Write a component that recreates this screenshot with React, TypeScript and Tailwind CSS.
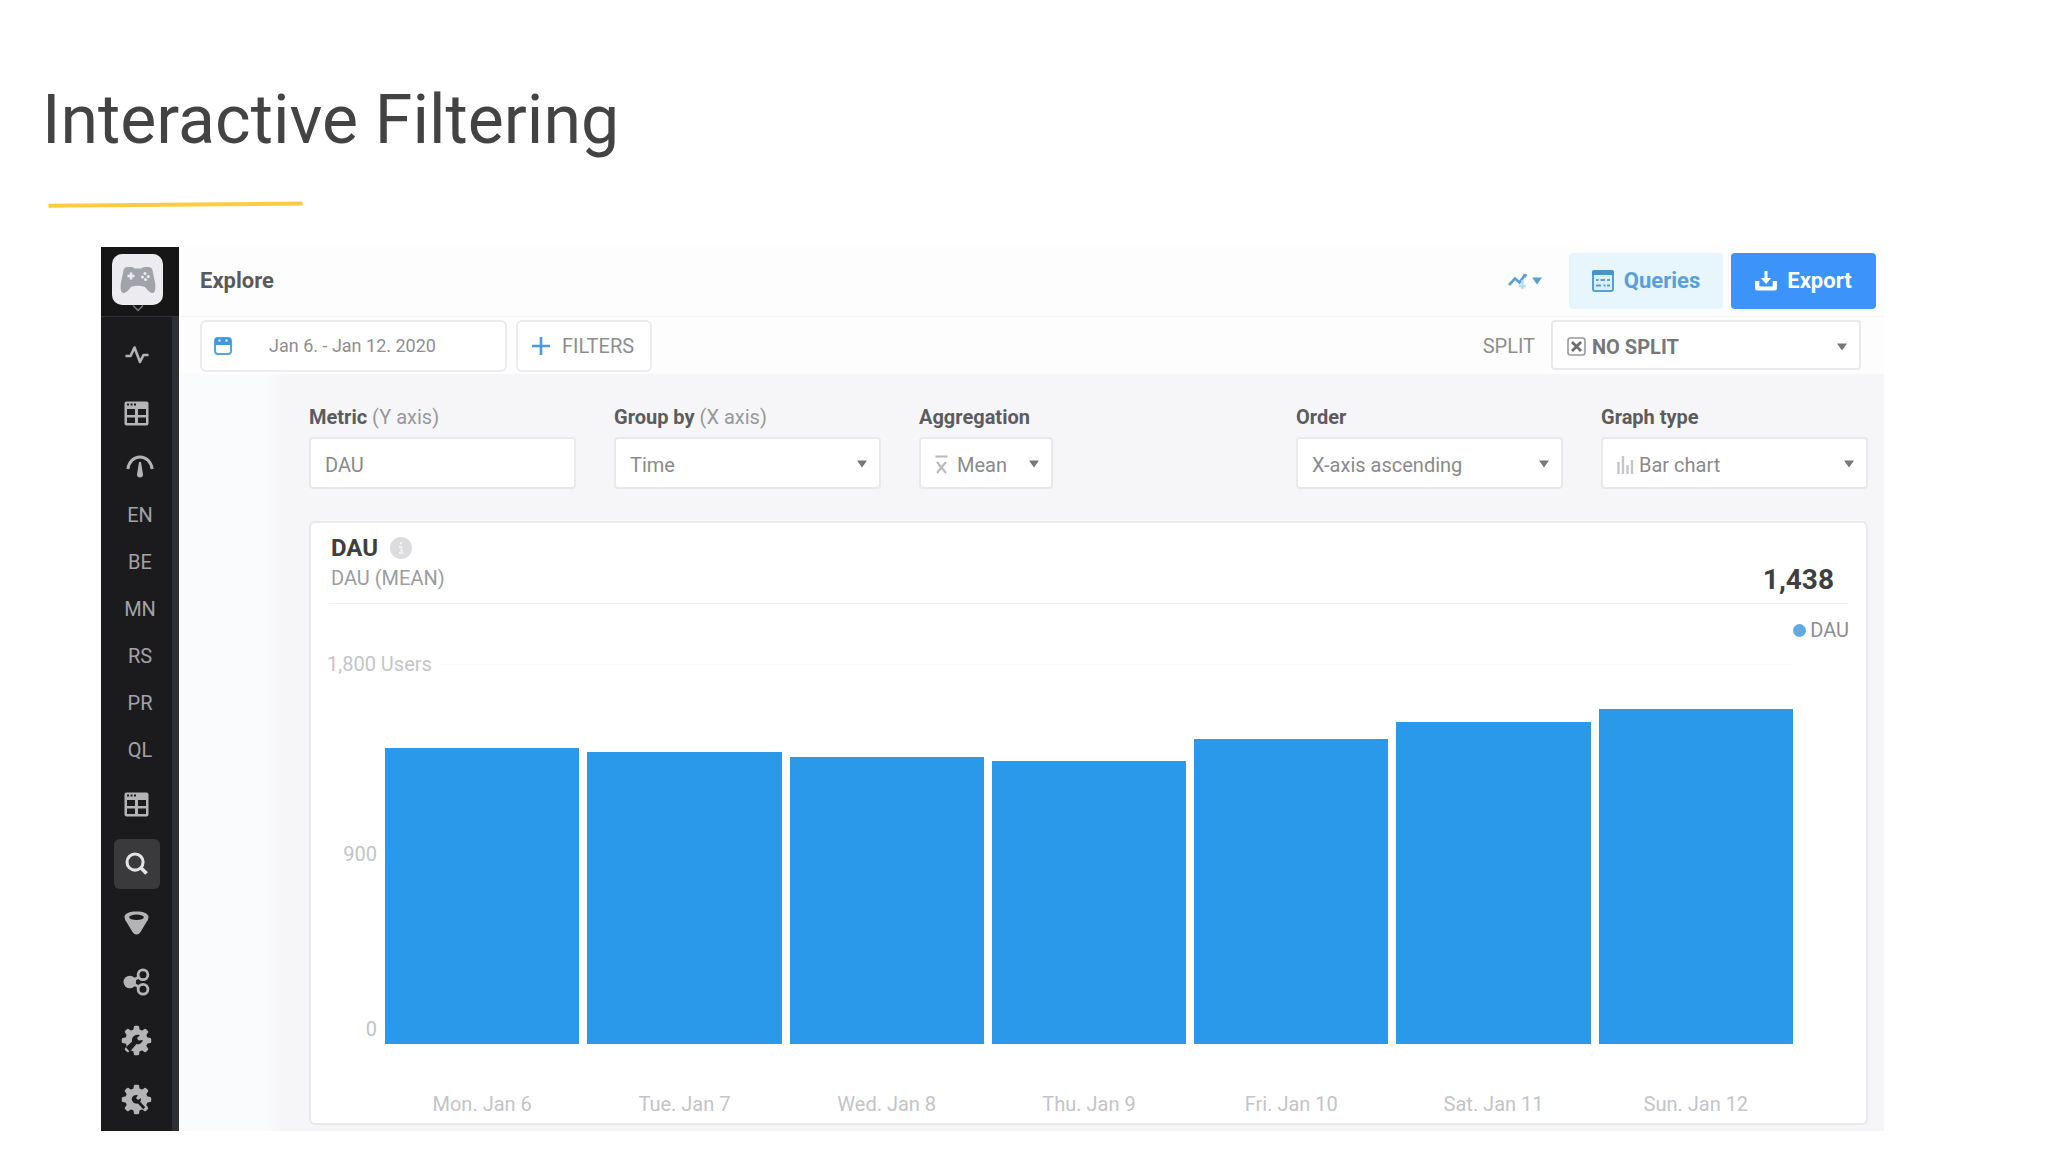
import type { ReactNode } from 'react'
import clsx from 'clsx'

const users = [
  { label: 'Mon. Jan 6', value: 1406 },
  { label: 'Tue. Jan 7', value: 1387 },
  { label: 'Wed. Jan 8', value: 1363 },
  { label: 'Thu. Jan 9', value: 1344 },
  { label: 'Fri. Jan 10', value: 1448 },
  { label: 'Sat. Jan 11', value: 1529 },
  { label: 'Sun. Jan 12', value: 1590 },
]

const maxUsers = 1800

const projects = ['EN', 'BE', 'MN', 'RS', 'PR', 'QL']

/* Icons */

function PulseIcon() {
  return (
    <svg width="24" height="20" viewBox="0 0 24 20" fill="none" stroke="currentColor" strokeWidth="2.6" strokeLinejoin="round">
      <path d="M0.5 11H5.5L9.5 2.5L15 17L18.5 10H23.5" />
    </svg>
  )
}

function TableIcon() {
  return (
    <svg width="25" height="25" viewBox="0 0 25 25">
      <rect x="0.5" y="0.5" width="24" height="24" rx="2" fill="currentColor" />
      <g fill="#1b1b1d">
        <rect x="3" y="2.5" width="2" height="2" />
        <rect x="6.5" y="2.5" width="2" height="2" />
        <rect x="10" y="2.5" width="2" height="2" />
        <rect x="3" y="8" width="8" height="6" />
        <rect x="14" y="8" width="8" height="6" />
        <rect x="3" y="16.5" width="8" height="5.5" />
        <rect x="14" y="16.5" width="8" height="5.5" />
      </g>
    </svg>
  )
}

function GaugeIcon() {
  return (
    <svg width="28" height="24" viewBox="0 0 28 24" fill="none" stroke="currentColor" strokeWidth="3">
      <path d="M1.8 15C3 7.5 8 3 14 3S25 7.5 26.2 15" />
      <path d="M13 8H15L17 20.5Q17 23.5 14 23.5T11 20.5Z" fill="currentColor" stroke="none" />
    </svg>
  )
}

function SearchIcon() {
  return (
    <svg width="23" height="23" viewBox="0 0 24 24" fill="none" stroke="currentColor" strokeWidth="3.2">
      <circle cx="10.5" cy="10.5" r="8.4" />
      <path d="M16.5 16.5L22.5 22.5" strokeWidth="3.8" />
    </svg>
  )
}

function FunnelIcon() {
  return (
    <svg width="25" height="24" viewBox="0 0 25 24">
      <path d="M0.5 6C0.5 2.5 5.5 0.5 12.5 0.5S24.5 2.5 24.5 6Q24.5 8.5 22.5 11L16.5 21Q15 23.5 12.5 23.5T8.5 21L2.5 11Q0.5 8.5 0.5 6Z" fill="currentColor" />
      <ellipse cx="12.5" cy="6.3" rx="7.4" ry="2.7" fill="#1b1b1d" />
    </svg>
  )
}

function ShareIcon() {
  return (
    <svg width="27" height="28" viewBox="0 0 27 28" fill="none" stroke="currentColor" strokeWidth="2.8">
      <path d="M7 14L19.5 7M7 14L19.5 21" />
      <circle cx="6.8" cy="14" r="6.3" fill="currentColor" stroke="none" />
      <circle cx="20" cy="6.8" r="4.9" fill="#1b1b1d" />
      <circle cx="20" cy="21.2" r="4.9" fill="#1b1b1d" />
    </svg>
  )
}

function Cog({ children }: { children: ReactNode }) {
  return (
    <svg width="31" height="31" viewBox="0 0 32 32">
      <g fill="currentColor">
        <circle cx="16" cy="16" r="11.5" />
        {[0, 45, 90, 135, 180, 225, 270, 315].map((deg) => (
          <path key={deg} d="M12.500 7L13.300 1.800Q13.500 0.800 14.500 0.800H17.500Q18.500 0.800 18.700 1.800L19.500 7Z" transform={`rotate(${deg} 16 16)`} />
        ))}
      </g>
      {children}
    </svg>
  )
}

function CogWrenchIcon() {
  return (
    <Cog>
      <path d="M11.500 17C10.500 12.500 14.500 9 19.500 10.500L16.500 13.500L18 16L22.500 15.500C22 19 18.500 20.500 16 19.500L9 27.500L5 23Z" fill="#1b1b1d" />
    </Cog>
  )
}

function CogToolIcon() {
  return (
    <Cog>
      <path d="M11 15.5A5 5 0 0 1 17.5 11.5L15.5 14.5L17.5 16.5L20.5 14.8Q21 17 19.8 18.2L25 24L23 26L17.5 20.2Q12 21 11 15.5Z" fill="#1b1b1d" />
    </Cog>
  )
}

function GamepadIcon() {
  return (
    <svg width="36" height="28" viewBox="0 0 36 28">
      <path d="M7.5 1H12Q13.500 1 14.500 2.500H21.500Q22.500 1 24 1H28.5Q31.500 1 32.500 4L35.3 18Q36 27 32.500 27Q29.500 27 25 21Q18 18.500 11 21Q6.500 27 3.500 27Q0 27 0.700 18L3.500 4Q4.500 1 7.500 1Z" fill="#a2a3aa" />
      <path d="M11 6.500V13.500M7.500 10H14.500" stroke="#ececf0" strokeWidth="2.600" />
      <g fill="#ececf0">
        <circle cx="25" cy="7.500" r="1.500" />
        <circle cx="28.200" cy="10.500" r="1.500" />
        <circle cx="22.500" cy="11" r="1.500" />
        <circle cx="25.500" cy="13.500" r="1.500" />
      </g>
    </svg>
  )
}

function CalendarIcon() {
  return (
    <svg width="18" height="18" viewBox="0 0 18 18">
      <rect x="1" y="1" width="16" height="16" rx="3" fill="#fff" stroke="#52a4e3" strokeWidth="2" />
      <path d="M1 8V3Q1 1 3 1H15Q17 1 17 3V8Z" fill="#3f98de" />
      <circle cx="5.500" cy="3.500" r="1.300" fill="#d4ebfb" />
      <circle cx="12.500" cy="3.500" r="1.300" fill="#d4ebfb" />
    </svg>
  )
}

function TrendIcon() {
  return (
    <svg width="20" height="18" viewBox="0 0 20 18" fill="none">
      <path d="M1 13L7 6.500L11.500 10.500L16.500 3.500" stroke="#5a9fd6" strokeWidth="2.600" />
      <path d="M15 1.500L19.500 2.500L17.500 6Z" fill="#5a9fd6" />
      <path d="M14.500 8V17M10.500 14H18" stroke="#b5dcf6" strokeWidth="2.400" />
    </svg>
  )
}

function QueriesIcon() {
  return (
    <svg width="22" height="22" viewBox="0 0 22 22">
      <rect x="1" y="1" width="20" height="20" rx="2" fill="#d9effb" stroke="#5a9fd0" strokeWidth="2" />
      <path d="M0 5V2Q0 0 2 0H20Q22 0 22 2V5Z" fill="#4794cc" />
      <path d="M4 10H6.500M8.500 10H13M15 10H18M4 15.500H9M11.500 15.500H13.500M15 15.500H18" stroke="#5a9fd0" strokeWidth="2" />
    </svg>
  )
}

function ExportIcon() {
  return (
    <svg width="22" height="20" viewBox="0 0 22 20" fill="none" stroke="currentColor">
      <path d="M2.200 10V17.500H19.800V10" strokeWidth="4.200" strokeLinejoin="round" />
      <path d="M11 0V9" strokeWidth="3" />
      <path d="M5.800 7H16.200L11 13Z" fill="currentColor" stroke="none" />
    </svg>
  )
}

function NoSplitIcon() {
  return (
    <svg width="19" height="19" viewBox="0 0 19 19" fill="none">
      <rect x="1" y="1" width="17" height="17" rx="2.500" stroke="#9a9a9c" strokeWidth="1.600" />
      <path d="M5 5L14 14M14 5L5 14" stroke="#6d6d70" strokeWidth="2.800" />
    </svg>
  )
}

function MeanIcon() {
  return (
    <svg width="13" height="19" viewBox="0 0 13 19" fill="none" stroke="#b9b9bc" strokeWidth="2">
      <path d="M0.500 1.500H12.500M2 7L11 18M11 7L2 18" />
    </svg>
  )
}

function BarsIcon() {
  return (
    <svg width="17" height="19" viewBox="0 0 17 19" stroke="#c6c6c9" strokeWidth="2.400">
      <path d="M1.500 7V19M6 1V19M10.500 10V19M15 5V19" />
    </svg>
  )
}

function Caret({ className }: { className?: string }) {
  return (
    <svg className={className} width="10" height="8" viewBox="0 0 10 8">
      <path d="M0 0.500H10L5 7.500Z" fill="currentColor" />
    </svg>
  )
}

/* Controls */

type SelectBoxProps = {
  id: string
  value: string
  icon?: ReactNode
  className?: string
  selectClassName?: string
}

function SelectBox({ id, value, icon, className, selectClassName = 'pl-3.5' }: SelectBoxProps) {
  return (
    <div className={clsx('relative', className)}>
      <select
        id={id}
        className={clsx(
          'h-full w-full appearance-none rounded-[4px] border-2 border-[#e9e9eb] bg-white pt-1 text-xl',
          selectClassName
        )}
      >
        <option>{value}</option>
      </select>
      {icon && <span className="pointer-events-none absolute inset-y-0 left-4 flex items-center pt-0.5">{icon}</span>}
      <Caret className="pointer-events-none absolute top-[23px] right-3.5 text-[#77777a]" />
    </div>
  )
}

type FieldProps = {
  id: string
  label: string
  hint?: string
  className?: string
  children: ReactNode
}

function Field({ id, label, hint, className, children }: FieldProps) {
  return (
    <div className={className}>
      <label htmlFor={id} className="mb-2 block text-xl leading-6 font-bold text-[#5c5c60]">
        {label} {hint && <span className="font-normal text-[#98989b]">{hint}</span>}
      </label>
      {children}
    </div>
  )
}

function NavIcon({ label, active, children }: { label: string; active?: boolean; children: ReactNode }) {
  return (
    <a href="#" aria-label={label} className="flex h-[59px] w-[71px] items-center justify-center">
      <span
        className={clsx(
          'flex h-[50px] w-[46px] items-center justify-center rounded-md',
          active ? 'bg-[#3a3a3c] text-[#e4e4e6]' : 'text-[#b4b4b7]'
        )}
      >
        {children}
      </span>
    </a>
  )
}

function Sidebar() {
  return (
    <aside className="w-[78px] shrink-0 border-r-[7px] border-[#2e2f33] bg-[#1b1b1d]">
      <div className="-mr-[7px] flex h-[70px] flex-col items-center border-b border-[#333336] bg-[#161617] pt-[7px] pr-[5px]">
        <button aria-label="Switch project" className="flex flex-col items-center text-[#77777a]">
          <span className="flex h-[51px] w-[51px] items-center justify-center rounded-[10px] bg-[#ececf0]">
            <GamepadIcon />
          </span>
          <svg width="12" height="7" viewBox="0 0 12 7" fill="none" stroke="currentColor" strokeWidth="1.500">
            <path d="M1 0.500L6 5.500L11 0.500" />
          </svg>
        </button>
      </div>
      <nav className="pt-2">
        <NavIcon label="Activity"><PulseIcon /></NavIcon>
        <NavIcon label="Dashboards"><TableIcon /></NavIcon>
        <a href="#" aria-label="Benchmarks" className="flex h-[46px] w-[78px] items-center justify-center text-[#b4b4b7]">
          <GaugeIcon />
        </a>
        <div className="flex flex-col pt-0.5">
          {projects.map((name) => (
            <a key={name} href="#" className="flex h-[47px] w-[78px] items-center justify-center text-xl text-[#a3a3a6]">
              {name}
            </a>
          ))}
        </div>
        <div className="pt-0.5">
          <NavIcon label="Tables"><TableIcon /></NavIcon>
          <NavIcon label="Explore" active><SearchIcon /></NavIcon>
          <NavIcon label="Funnels"><FunnelIcon /></NavIcon>
          <NavIcon label="Share"><ShareIcon /></NavIcon>
          <NavIcon label="Tools"><CogWrenchIcon /></NavIcon>
          <NavIcon label="Settings"><CogToolIcon /></NavIcon>
        </div>
      </nav>
    </aside>
  )
}

function Header() {
  return (
    <header className="flex h-[70px] items-center border-b border-[#f5f5f8] pr-2 pb-0.5 pl-[21px]">
      <h2 className="flex-1 text-[22px] font-bold text-[#5a5a5d]">Explore</h2>
      <button aria-label="Chart options" className="mr-[27px] flex items-center gap-1 text-[#5a9fd6]">
        <TrendIcon />
        <Caret />
      </button>
      <button className="mr-2 flex h-14 w-[154px] items-center justify-center gap-2.5 rounded bg-[#e7f5fd] text-[22px] font-bold text-[#5a9fd6]">
        <QueriesIcon />
        Queries
      </button>
      <button className="flex h-14 w-[145px] items-center justify-center gap-2.5 rounded bg-[#3c94fa] text-[22px] font-bold text-white">
        <ExportIcon />
        Export
      </button>
    </header>
  )
}

function Toolbar() {
  return (
    <div className="flex h-[57px] items-start pt-[3px] pr-[23px] pl-[21px] text-xl text-[#8e8e91]">
      <button className="flex h-[52px] w-[307px] items-center rounded-md border-2 border-[#ececef] bg-white pl-3">
        <CalendarIcon />
        <span className="ml-[37px] text-lg">Jan 6. - Jan 12. 2020</span>
      </button>
      <button className="ml-[9px] flex h-[52px] w-[136px] items-center gap-3 rounded-md border-2 border-[#ececef] bg-white pl-3.5">
        <svg width="18" height="18" viewBox="0 0 18 18" stroke="#4b9bdc" strokeWidth="2.600">
          <path d="M9 0V18M0 9H18" />
        </svg>
        FILTERS
      </button>
      <label htmlFor="split" className="mr-4 ml-auto leading-[52px]">SPLIT</label>
      <SelectBox
        id="split"
        value="NO SPLIT"
        icon={<NoSplitIcon />}
        className="h-[50px] w-[310px]"
        selectClassName="pl-[39px] font-bold text-[#77777a]"
      />
    </div>
  )
}

function Filters() {
  return (
    <div className="flex gap-[38px] text-[#8a8a8d]">
      <Field id="metric" label="Metric" hint="(Y axis)" className="w-[267px]">
        <input
          id="metric"
          defaultValue="DAU"
          className="h-[52px] w-full rounded-[4px] border-2 border-[#e9e9eb] bg-white px-3.5 pt-1 text-xl"
        />
      </Field>
      <Field id="group" label="Group by" hint="(X axis)" className="w-[267px]">
        <SelectBox id="group" value="Time" className="h-[52px]" />
      </Field>
      <Field id="aggregation" label="Aggregation" className="w-[134px]">
        <SelectBox id="aggregation" value="Mean" icon={<MeanIcon />} className="h-[52px]" selectClassName="pl-9" />
      </Field>
      <Field id="order" label="Order" className="ml-auto w-[267px]">
        <SelectBox id="order" value="X-axis ascending" className="h-[52px]" />
      </Field>
      <Field id="graph" label="Graph type" className="w-[267px]">
        <SelectBox id="graph" value="Bar chart" icon={<BarsIcon />} className="h-[52px]" selectClassName="pl-9" />
      </Field>
    </div>
  )
}

function ChartCard() {
  return (
    <section className="mt-8 rounded-md border-2 border-[#e9e9eb] bg-white pb-[7px]">
      <div className="mx-[18px] flex h-[81px] items-start justify-between border-b border-[#f1f1f4] pt-[11px] pl-0.5">
        <div>
          <div className="flex items-center gap-3">
            <h3 className="text-2xl leading-7 font-bold text-[#3f3f42]">DAU</h3>
            <svg width="22" height="22" viewBox="0 0 22 22">
              <circle cx="11" cy="11" r="11" fill="#dcdcde" />
              <path d="M11 5V7.500M9 10H11.500V16M9 16H13.500" stroke="#f0f0f2" strokeWidth="2" fill="none" />
            </svg>
          </div>
          <p className="mt-1 text-xl leading-6 text-[#9c9c9f]">DAU (MEAN)</p>
        </div>
        <strong className="mt-7 mr-3.5 text-[28px] leading-9 font-bold text-[#3f3f42]">1,438</strong>
      </div>

      <div className="mt-3.5 mr-[17px] flex items-center justify-end gap-1 text-xl leading-6 text-[#8e8e91]">
        <span className="h-[13px] w-[13px] rounded-full bg-[#62aae2]" />
        DAU
      </div>

      <div className="mt-2.5 flex pr-[73px] pl-4 text-xl leading-6 text-[#c4c4c7]">
        <div className="z-10 mr-2 w-[50px] text-right">
          <div className="h-[190px] text-left whitespace-nowrap">
            <span className="bg-white pr-2">1,800 Users</span>
          </div>
          <div className="h-[175px]">900</div>
          <div>0</div>
        </div>
        <div className="flex-1 pt-3">
          <div className="flex h-[380px] items-end gap-2 border-t border-[#fafafb]">
            {users.map((day) => (
              <div
                key={day.label}
                className="flex-1 bg-[#2b99ea]"
                style={{ height: `${(day.value / maxUsers) * 100}%` }}
              />
            ))}
          </div>
          <div className="mt-12 flex gap-2 text-center">
            {users.map((day) => (
              <div key={day.label} className="flex-1">{day.label}</div>
            ))}
          </div>
        </div>
      </div>
    </section>
  )
}

export default function App() {
  return (
    <main className="bg-white pt-20 pb-[22px] font-[Roboto,'Liberation_Sans',sans-serif]">
      <h1 className="ml-[42px] text-[68px] leading-[80px] text-[#434343]">Interactive Filtering</h1>
      <svg className="mt-[41px] ml-12" width="255" height="7" viewBox="0 0 255 7">
        <path d="M0.500 4.800L254.500 2.500" stroke="#fbcb43" strokeWidth="4" />
      </svg>

      <div className="mt-[39px] mr-[164px] ml-[101px] flex">
        <Sidebar />
        <div className="min-w-0 flex-1 bg-[#fdfdfe]">
          <Header />
          <Toolbar />
          <div className="flex bg-[#f6f6f8]">
            <div className="w-[105px] shrink-0 bg-linear-to-r from-[#fafbfd] from-80% to-[#f6f6f8]" />
            <div className="min-w-0 flex-1 pt-[31px] pr-4 pb-1.5 pl-[25px]">
              <Filters />
              <ChartCard />
            </div>
          </div>
        </div>
      </div>
    </main>
  )
}
